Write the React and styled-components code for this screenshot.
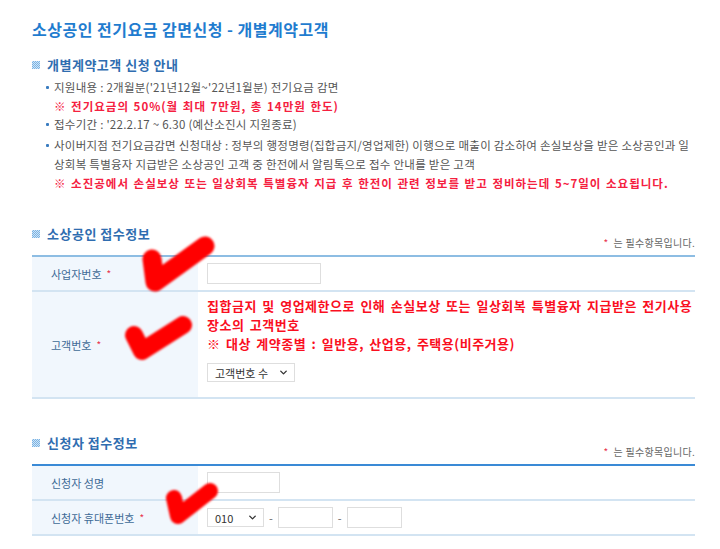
import React from "react";
import styled, { createGlobalStyle } from "styled-components";
import { ChevronDown } from "lucide-react";

const GlobalStyle = createGlobalStyle`
  body {
    margin: 0;
    background: #fff;
    font-family: "Noto Sans CJK KR", "Noto Sans", sans-serif;
  }
`;

const Page = styled.div`
  position: relative;
  width: 720px;
  height: 549px;
  overflow: hidden;
  box-sizing: border-box;
  padding: 19px 25px 0 32px;
`;

const Title = styled.h1`
  margin: 0;
  font-size: 16px;
  line-height: 20px;
  font-weight: 700;
  color: #1f7ccf;
  letter-spacing: 0.5px;
`;

const SectionTitle = styled.h2`
  margin: ${(p) => p.$top || 0}px 0 0;
  display: flex;
  align-items: center;
  gap: 7px;
  font-size: 13px;
  line-height: 18px;
  font-weight: 700;
  color: #2f6db0;
  letter-spacing: 0.5px;

  &::before {
    content: "";
    width: 8px;
    height: 8px;
    background: repeating-conic-gradient(#7ab3e4 0 25%, #cfe4f6 0 50%) 0 0 / 2px 2px;
  }
`;

const List = styled.ul`
  margin: 4px 0 0;
  padding: 0 0 0 14px;
  list-style: none;
`;

const Item = styled.li`
  display: flex;
  margin-top: ${(p) => p.$gap || 0}px;
  font-size: 11.5px;
  line-height: 19px;
  letter-spacing: 0.25px;
  color: #555;
  white-space: nowrap;
`;

const Dot = styled.span`
  flex: none;
  width: 3px;
  height: 3px;
  margin: 8px 5px 0 0;
  background: #3a7cc0;
  border-radius: 1px;
`;

const Note = styled.div`
  font-weight: 700;
  color: #f5203f;
  line-height: 18px;
  letter-spacing: 1px;
  word-spacing: 1px;
`;

const HeaderRow = styled.div`
  display: flex;
  justify-content: space-between;
  align-items: flex-end;
  margin-top: ${(p) => p.$top}px;

  h2 {
    margin-bottom: 6px;
  }
`;

const Required = styled.span`
  font-size: 10px;
  line-height: 12px;
  color: #666;
  letter-spacing: 0.3px;

  b {
    color: #e8354b;
    margin-right: 5px;
    font-weight: 400;
  }
`;

const Table = styled.div`
  margin-top: 6px;
  border-top: 2px solid ${(p) => p.$line};
  border-bottom: 2px solid #d3e4f2;
`;

const Row = styled.div`
  display: grid;
  grid-template-columns: 166px 1fr;
  min-height: 33px;

  & + & {
    border-top: 2px solid #d3e4f2;
  }
`;

const Label = styled.div`
  display: flex;
  align-items: center;
  padding-left: 19px;
  background: #f1f7fd;
  font-size: 11px;
  color: #3f6b97;

  b {
    color: #e8354b;
    margin-left: 5px;
    font-weight: 400;
    font-size: 10px;
  }
`;

const Value = styled.div`
  display: flex;
  flex-direction: ${(p) => (p.$column ? "column" : "row")};
  justify-content: ${(p) => (p.$column ? "center" : "flex-start")};
  align-items: ${(p) => (p.$column ? "flex-start" : "center")};
  gap: ${(p) => (p.$column ? 7 : 5)}px;
  padding: ${(p) => (p.$column ? "4px 9px 15px" : "0 9px")};
`;

const Input = styled.div`
  box-sizing: border-box;
  width: ${(p) => p.$w}px;
  height: 21px;
  border: 1px solid #dedede;
  background: #fff;
`;

const Select = styled.div`
  box-sizing: border-box;
  display: flex;
  align-items: center;
  justify-content: space-between;
  width: ${(p) => p.$w}px;
  height: 19px;
  padding: 0 5px 0 7px;
  border: 1px solid #dedede;
  font-size: 11px;
  color: #333;
  background: #fff;
`;

const Dash = styled.span`
  font-size: 11px;
  color: #666;
`;

const Alert = styled.div`
  font-size: 13px;
  line-height: 19px;
  font-weight: 700;
  color: #fa0f1f;
  white-space: nowrap;
  letter-spacing: 0.5px;
  word-spacing: 2px;
  margin-bottom: 3px;
`;

const Marks = styled.svg`
  position: absolute;
  left: 0;
  top: 0;
  pointer-events: none;
`;

function CheckMarks() {
  return (
    <Marks width="720" height="549" viewBox="0 0 720 549">
      <defs>
        <filter id="soft" x="-20%" y="-20%" width="140%" height="140%">
          <feGaussianBlur stdDeviation="1.2" />
        </filter>
      </defs>
      <g
        fill="none"
        stroke="#ff0000"
        strokeLinecap="round"
        strokeLinejoin="round"
        filter="url(#soft)"
      >
        <path d="M152 259 L155 282 L205 246" strokeWidth="19" />
        <path d="M134 335 L142 351 L183 325" strokeWidth="18" />
        <path d="M174 498 L178 516 L210 491" strokeWidth="16" />
      </g>
    </Marks>
  );
}

export default function App() {
  return (
    <>
      <GlobalStyle />
      <Page>
        <Title>소상공인 전기요금 감면신청 - 개별계약고객</Title>

        <SectionTitle $top={17}>개별계약고객 신청 안내</SectionTitle>
        <List>
          <Item>
            <Dot />
            <div>
              지원내용 : 2개월분('21년12월~'22년1월분) 전기요금 감면
              <Note>※ 전기요금의 50%(월 최대 7만원, 총 14만원 한도)</Note>
            </div>
          </Item>
          <Item>
            <Dot />
            <div>접수기간 : '22.2.17 ~ 6.30 (예산소진시 지원종료)</div>
          </Item>
          <Item $gap={2}>
            <Dot />
            <div>
              사이버지점 전기요금감면 신청대상 : 정부의 행정명령(집합금지/영업제한) 이행으로 매출이 감소하여 손실보상을 받은 소상공인과 일
              <br />
              상회복 특별융자 지급받은 소상공인 고객 중 한전에서 알림톡으로 접수 안내를 받은 고객
              <Note>
                ※ 소진공에서 손실보상 또는 일상회복 특별융자 지급 후 한전이 관련 정보를 받고 정비하는데 5~7일이 소요됩니다.
              </Note>
            </div>
          </Item>
        </List>

        <HeaderRow $top={33}>
          <SectionTitle>소상공인 접수정보</SectionTitle>
          <Required>
            <b>*</b>는 필수항목입니다.
          </Required>
        </HeaderRow>
        <Table $line="#8dbde3">
          <Row>
            <Label>
              사업자번호<b>*</b>
            </Label>
            <Value>
              <Input $w={114} />
            </Value>
          </Row>
          <Row>
            <Label>
              고객번호<b>*</b>
            </Label>
            <Value $column>
              <Alert>
                집합금지 및 영업제한으로 인해 손실보상 또는 일상회복 특별융자 지급받은 전기사용
                <br />
                장소의 고객번호
                <br />※ 대상 계약종별 : 일반용, 산업용, 주택용(비주거용)
              </Alert>
              <Select $w={88}>
                고객번호 수
                <ChevronDown size={11} strokeWidth={3} color="#333" />
              </Select>
            </Value>
          </Row>
        </Table>

        <HeaderRow $top={35}>
          <SectionTitle>신청자 접수정보</SectionTitle>
          <Required>
            <b>*</b>는 필수항목입니다.
          </Required>
        </HeaderRow>
        <Table $line="#3a8ad6">
          <Row>
            <Label>신청자 성명</Label>
            <Value>
              <Input $w={73} />
            </Value>
          </Row>
          <Row>
            <Label>
              신청자 휴대폰번호<b>*</b>
            </Label>
            <Value>
              <Select $w={57}>
                010
                <ChevronDown size={11} strokeWidth={3} color="#333" />
              </Select>
              <Dash>-</Dash>
              <Input $w={55} />
              <Dash>-</Dash>
              <Input $w={55} />
            </Value>
          </Row>
        </Table>
        <CheckMarks />
      </Page>
    </>
  );
}
